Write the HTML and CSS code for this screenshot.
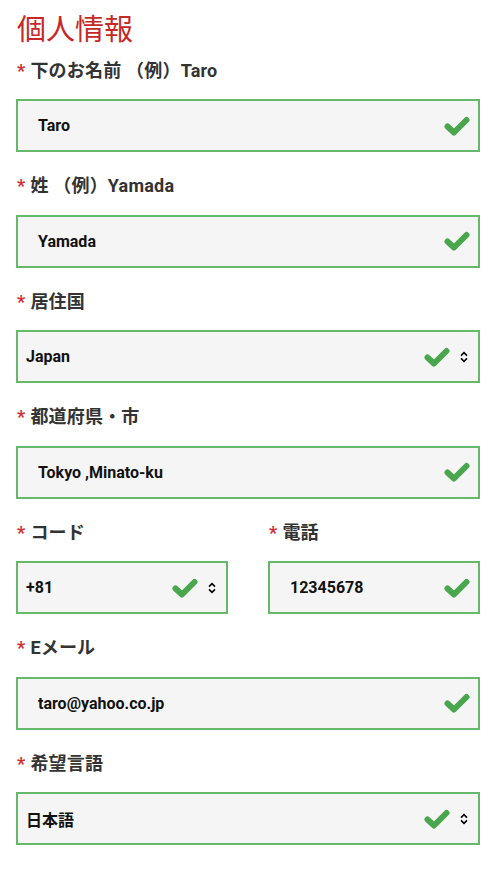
FILE: index.html
```html
<!DOCTYPE html>
<html lang="ja">
<head>
<meta charset="utf-8">
<title>個人情報</title>
<link rel="stylesheet" href="styles.css">
</head>
<body>
<main class="form">
  <h1 class="title">個人情報</h1>

  <div class="field">
    <div class="label"><span class="req">*</span>下のお名前 （例）Taro</div>
    <div class="box text">
      <span class="value">Taro</span>
      <svg class="check" viewBox="0 0 26 20"><path d="M3.5 10.5 L10 16.5 L22.5 4"/></svg>
    </div>
  </div>

  <div class="field">
    <div class="label"><span class="req">*</span>姓 （例）Yamada</div>
    <div class="box text">
      <span class="value">Yamada</span>
      <svg class="check" viewBox="0 0 26 20"><path d="M3.5 10.5 L10 16.5 L22.5 4"/></svg>
    </div>
  </div>

  <div class="field">
    <div class="label"><span class="req">*</span>居住国</div>
    <div class="box select">
      <span class="value">Japan</span>
      <svg class="check" viewBox="0 0 26 20"><path d="M3.5 10.5 L10 16.5 L22.5 4"/></svg>
      <svg class="chev" viewBox="0 0 8 12"><path d="M1 4.6 L4 1.6 L7 4.6 M1 7.4 L4 10.4 L7 7.4"/></svg>
    </div>
  </div>

  <div class="field">
    <div class="label"><span class="req">*</span>都道府県・市</div>
    <div class="box text">
      <span class="value">Tokyo ,Minato-ku</span>
      <svg class="check" viewBox="0 0 26 20"><path d="M3.5 10.5 L10 16.5 L22.5 4"/></svg>
    </div>
  </div>

  <div class="row">
    <div class="field">
      <div class="label"><span class="req">*</span>コード</div>
      <div class="box select">
        <span class="value">+81</span>
        <svg class="check" viewBox="0 0 26 20"><path d="M3.5 10.5 L10 16.5 L22.5 4"/></svg>
        <svg class="chev" viewBox="0 0 8 12"><path d="M1 4.6 L4 1.6 L7 4.6 M1 7.4 L4 10.4 L7 7.4"/></svg>
      </div>
    </div>
    <div class="field">
      <div class="label"><span class="req">*</span>電話</div>
      <div class="box text">
        <span class="value">12345678</span>
        <svg class="check" viewBox="0 0 26 20"><path d="M3.5 10.5 L10 16.5 L22.5 4"/></svg>
      </div>
    </div>
  </div>

  <div class="field">
    <div class="label"><span class="req">*</span>Eメール</div>
    <div class="box text">
      <span class="value">taro@yahoo.co.jp</span>
      <svg class="check" viewBox="0 0 26 20"><path d="M3.5 10.5 L10 16.5 L22.5 4"/></svg>
    </div>
  </div>

  <div class="field">
    <div class="label"><span class="req">*</span>希望言語</div>
    <div class="box select">
      <span class="value">日本語</span>
      <svg class="check" viewBox="0 0 26 20"><path d="M3.5 10.5 L10 16.5 L22.5 4"/></svg>
      <svg class="chev" viewBox="0 0 8 12"><path d="M1 4.6 L4 1.6 L7 4.6 M1 7.4 L4 10.4 L7 7.4"/></svg>
    </div>
  </div>
</main>
</body>
</html>
```

FILE: styles.css
```css
* {
  box-sizing: border-box;
}

html, body {
  margin: 0;
  padding: 0;
  background: #ffffff;
}

body {
  font-family: Roboto, "Noto Sans CJK JP", sans-serif;
  color: #333333;
}

.form {
  width: 480px;
  padding: 9px 0 0 16px;
}

.title {
  margin: 0 0 13.5px 1px;
  font-family: "Noto Sans CJK JP", sans-serif;
  font-size: 29px;
  line-height: 36px;
  font-weight: 400;
  color: #c62828;
}

.field {
  margin-bottom: 22px;
}

.label {
  height: 24px;
  line-height: 24px;
  font-size: 18px;
  font-weight: 700;
  letter-spacing: 0.2px;
  color: #333333;
  margin-bottom: 16.5px;
  white-space: nowrap;
}

.req {
  color: #d32f2f;
  margin: 0 5px 0 1px;
}

.box {
  display: flex;
  align-items: center;
  height: 53px;
  border: 2px solid #66b86a;
  background: #f5f5f5;
  font-size: 16px;
  font-weight: 700;
  color: #111111;
}

.box.text {
  padding: 0 8px 0 20px;
}

.box.select {
  padding: 0 10px 0 8px;
}

.value {
  flex: 1;
  white-space: nowrap;
}

.check {
  width: 26px;
  height: 20px;
  flex: none;
}

.check path {
  fill: none;
  stroke: #4aa64e;
  stroke-width: 6;
  stroke-linecap: round;
  stroke-linejoin: round;
}

.chev {
  width: 8px;
  height: 12px;
  margin-left: 10px;
  flex: none;
}

.chev path {
  fill: none;
  stroke: #000000;
  stroke-width: 1.5;
}

.row {
  display: grid;
  grid-template-columns: 212px 212px;
  column-gap: 40px;
}
```
